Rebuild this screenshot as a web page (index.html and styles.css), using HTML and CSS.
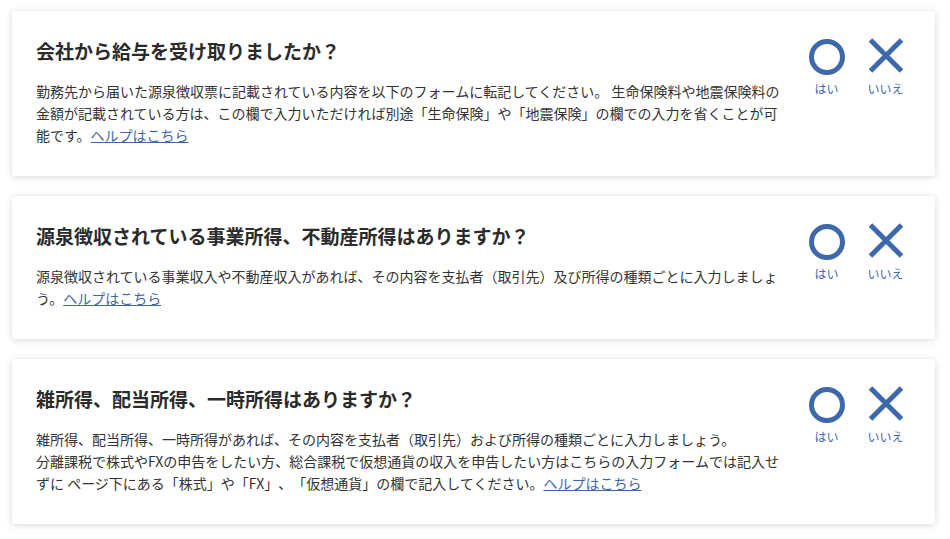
FILE: index.html
```html
<!DOCTYPE html>
<html lang="ja">
<head>
<meta charset="utf-8">
<link rel="stylesheet" href="styles.css">
</head>
<body>
<div class="list">
  <section class="card">
    <div class="text">
      <h2 class="title">会社から給与を受け取りましたか？</h2>
      <p class="desc">勤務先から届いた源泉徴収票に記載されている内容を以下のフォームに転記してください。 生命保険料や地震保険料の金額が記載されている方は、この欄で入力いただければ別途「生命保険」や「地震保険」の欄での入力を省くことが可能です。<a href="#" class="help">ヘルプはこちら</a></p>
    </div>
    <div class="choices">
      <button class="choice">
        <svg class="icon" viewBox="0 0 40 40"><circle cx="20" cy="20" r="15.5" fill="none" stroke="#3d68a9" stroke-width="5"/></svg>
        <span class="label">はい</span>
      </button>
      <button class="choice">
        <svg class="icon" viewBox="0 0 40 40"><path d="M4.5 3 L35.5 34 M35.5 3 L4.5 34" fill="none" stroke="#3d68a9" stroke-width="5"/></svg>
        <span class="label">いいえ</span>
      </button>
    </div>
  </section>
  <section class="card">
    <div class="text">
      <h2 class="title">源泉徴収されている事業所得、不動産所得はありますか？</h2>
      <p class="desc">源泉徴収されている事業収入や不動産収入があれば、その内容を支払者（取引先）及び所得の種類ごとに入力しましょう。<a href="#" class="help">ヘルプはこちら</a></p>
    </div>
    <div class="choices">
      <button class="choice">
        <svg class="icon" viewBox="0 0 40 40"><circle cx="20" cy="20" r="15.5" fill="none" stroke="#3d68a9" stroke-width="5"/></svg>
        <span class="label">はい</span>
      </button>
      <button class="choice">
        <svg class="icon" viewBox="0 0 40 40"><path d="M4.5 3 L35.5 34 M35.5 3 L4.5 34" fill="none" stroke="#3d68a9" stroke-width="5"/></svg>
        <span class="label">いいえ</span>
      </button>
    </div>
  </section>
  <section class="card">
    <div class="text">
      <h2 class="title">雑所得、配当所得、一時所得はありますか？</h2>
      <p class="desc">雑所得、配当所得、一時所得があれば、その内容を支払者（取引先）および所得の種類ごとに入力しましょう。<br>分離課税で株式やFXの申告をしたい方、総合課税で仮想通貨の収入を申告したい方はこちらの入力フォームでは記入せずに ページ下にある「株式」や「FX」、「仮想通貨」の欄で記入してください。<a href="#" class="help">ヘルプはこちら</a></p>
    </div>
    <div class="choices">
      <button class="choice">
        <svg class="icon" viewBox="0 0 40 40"><circle cx="20" cy="20" r="15.5" fill="none" stroke="#3d68a9" stroke-width="5"/></svg>
        <span class="label">はい</span>
      </button>
      <button class="choice">
        <svg class="icon" viewBox="0 0 40 40"><path d="M4.5 3 L35.5 34 M35.5 3 L4.5 34" fill="none" stroke="#3d68a9" stroke-width="5"/></svg>
        <span class="label">いいえ</span>
      </button>
    </div>
  </section>
  <section class="card"></section>
</div>
</body>
</html>
```
FILE: styles.css
```css
html, body {
  margin: 0;
  padding: 0;
  background: #ffffff;
}
body {
  font-family: "Noto Sans CJK JP", "Noto Sans", sans-serif;
  color: #333333;
  overflow: hidden;
  text-spacing-trim: space-all;
}
.list {
  display: flex;
  flex-direction: column;
  gap: 20px;
  padding: 11px 15px 0 12px;
}
.card {
  display: flex;
  gap: 20px;
  background: #ffffff;
  border-radius: 3px;
  box-shadow: 0 1px 7px rgba(0, 0, 0, 0.16);
  padding: 26px 25px 30px 24px;
}
.card:empty {
  min-height: 40px;
}
.text {
  flex: 1;
  min-width: 0;
}
.title {
  margin: 0 0 16px;
  font-size: 19px;
  line-height: 27px;
  font-weight: 700;
  color: #2b2b2b;
}
.desc {
  margin: 0;
  font-size: 14px;
  line-height: 22px;
  color: #333333;
}
.help {
  color: #3d68a9;
  text-decoration: underline;
}
.choices {
  display: flex;
  gap: 10px;
  flex: none;
}
.choice {
  width: 49px;
  padding: 0;
  border: 0;
  background: none;
  display: flex;
  flex-direction: column;
  align-items: center;
  font-family: inherit;
  cursor: pointer;
}
.icon {
  width: 40px;
  height: 40px;
  display: block;
}
.label {
  margin-top: 3px;
  font-size: 12px;
  line-height: 18px;
  color: #3d68a9;
}
```
